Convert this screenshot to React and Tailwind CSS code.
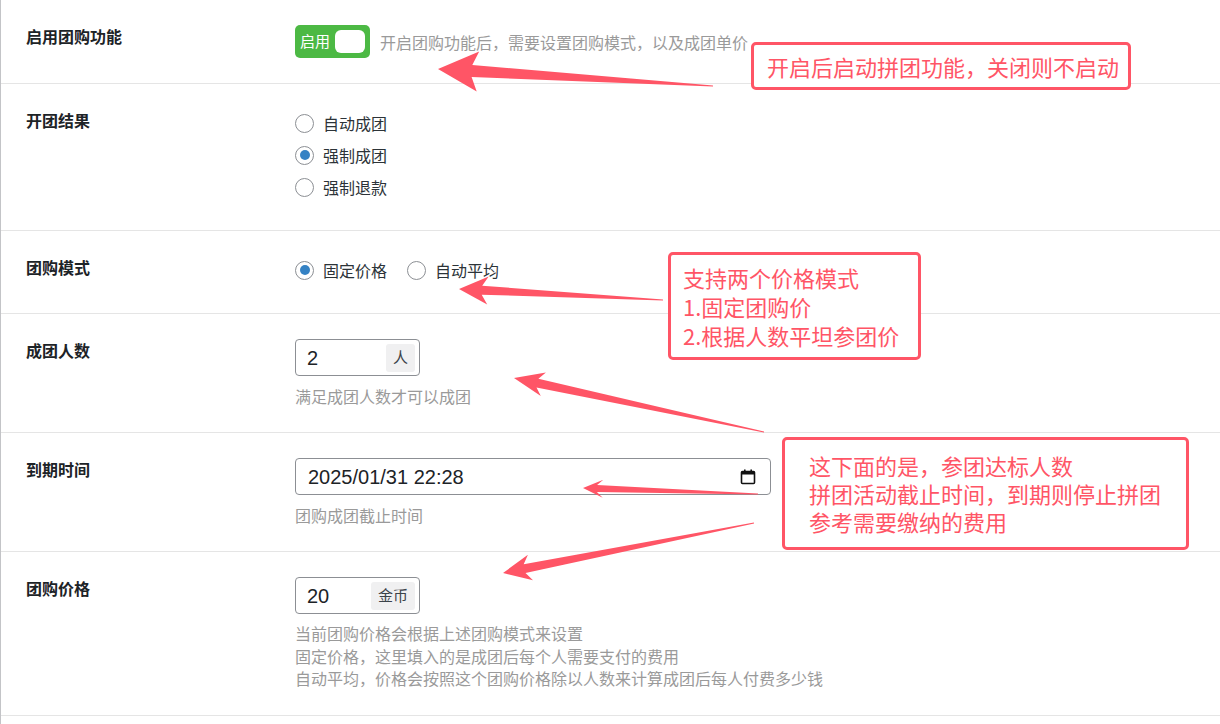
import React from 'react'

const RED = '#ff5566'

function arrowPoints(tail, tip, headLen, headW, shaftW) {
  const dx = tip[0] - tail[0]
  const dy = tip[1] - tail[1]
  const len = Math.hypot(dx, dy)
  const ux = dx / len
  const uy = dy / len
  const nx = -uy
  const ny = ux
  const bx = tip[0] - ux * headLen
  const by = tip[1] - uy * headLen
  const pts = [
    [tail[0] + nx * 0.6, tail[1] + ny * 0.6],
    [bx + nx * shaftW + ux * 2, by + ny * shaftW + uy * 2],
    [bx + nx * headW - ux * 4, by + ny * headW - uy * 4],
    tip,
    [bx - nx * headW - ux * 4, by - ny * headW - uy * 4],
    [bx - nx * shaftW + ux * 2, by - ny * shaftW + uy * 2],
    [tail[0] - nx * 0.6, tail[1] - ny * 0.6],
  ]
  return pts.map((p) => `${p[0].toFixed(1)},${p[1].toFixed(1)}`).join(' ')
}

const arrows = [
  { tail: [712, 86], tip: [437, 69], hl: 36, hw: 20, sw: 6 },
  { tail: [662, 300], tip: [458, 289], hl: 25, hw: 14, sw: 4.5 },
  { tail: [763, 432], tip: [513, 378], hl: 26, hw: 12, sw: 4.5 },
  { tail: [757, 494], tip: [582, 488], hl: 16, hw: 9, sw: 3.5 },
  { tail: [753, 523], tip: [502, 573], hl: 24, hw: 13, sw: 4.5 },
]

function Radio({ checked, label }) {
  return (
    <label className="flex items-center h-[28px] text-[16px] text-[#2c3338]">
      <span className="w-[19px] h-[19px] rounded-full border border-[#8c8f94] bg-white flex items-center justify-center mr-[9px]">
        {checked && <span className="w-[10px] h-[10px] rounded-full bg-[#3582c4]" />}
      </span>
      {label}
    </label>
  )
}

function Row({ label, children, className }) {
  return (
    <div className={`flex border-b border-[#e5e5e5] pt-[25px] ${className}`}>
      <div className="w-[294px] shrink-0 pl-[25px] text-[16px] leading-[22px] font-bold text-[#1d2327]">{label}</div>
      <div className="flex-1">{children}</div>
    </div>
  )
}

function Help({ children }) {
  return <div className="text-[16px] leading-[22.5px] text-[#9a9a9a]">{children}</div>
}

function Suffixed({ value, unit }) {
  return (
    <div className="w-[125px] h-[37px] border border-[#8c8f94] rounded-[4px] flex items-center pl-[11px] pr-[4px] bg-white">
      <span className="flex-1 text-[20px] text-[#1d2327] font-['Liberation_Sans','Noto_Sans',sans-serif]">{value}</span>
      <span className="h-[28px] px-[7px] rounded-[3px] bg-[#f0f0f1] text-[15px] text-[#3c434a] flex items-center">{unit}</span>
    </div>
  )
}

export default function App() {
  return (
    <div className="relative w-[1220px] h-[724px] bg-white overflow-hidden border-l border-[#c3c4c7] font-['Noto_Sans_CJK_SC','Noto_Sans',sans-serif]">
      <Row label="启用团购功能" className="h-[84px]">
        <div className="flex items-center">
          <div className="w-[75px] h-[33px] rounded-[5px] bg-[#4cb944] flex items-center pl-[5px] pr-[5px]">
            <span className="text-white text-[15px] flex-1">启用</span>
            <span className="w-[30px] h-[23px] bg-white rounded-[6px]" />
          </div>
          <span className="ml-[10px] text-[16px] text-[#9a9a9a]">开启团购功能后，需要设置团购模式，以及成团单价</span>
        </div>
      </Row>
      <Row label="开团结果" className="h-[147px]">
        <div className="flex flex-col gap-[4px]">
          <Radio label="自动成团" />
          <Radio checked label="强制成团" />
          <Radio label="强制退款" />
        </div>
      </Row>
      <Row label="团购模式" className="h-[83px]">
        <div className="flex gap-[20px]">
          <Radio checked label="固定价格" />
          <Radio label="自动平均" />
        </div>
      </Row>
      <Row label="成团人数" className="h-[119px]">
        <Suffixed value="2" unit="人" />
        <div className="mt-[9px]">
          <Help>满足成团人数才可以成团</Help>
        </div>
      </Row>
      <Row label="到期时间" className="h-[119px]">
        <div className="w-[476px] h-[37px] border border-[#8c8f94] rounded-[4px] flex items-center pl-[12px] pr-[14px]">
          <span className="flex-1 text-[20px] text-[#1d2327] font-['Liberation_Sans','Noto_Sans',sans-serif]">2025/01/31 22:28</span>
          <svg width="16" height="16" viewBox="0 0 16 16">
            <rect x="1.5" y="2.5" width="13" height="12" rx="1" fill="none" stroke="#111" strokeWidth="1.6" />
            <rect x="1.5" y="2.5" width="13" height="3" fill="#111" />
            <rect x="4" y="0.5" width="1.6" height="3" fill="#111" />
            <rect x="10.4" y="0.5" width="1.6" height="3" fill="#111" />
          </svg>
        </div>
        <div className="mt-[9px]">
          <Help>团购成团截止时间</Help>
        </div>
      </Row>
      <Row label="团购价格" className="h-[164px]">
        <Suffixed value="20" unit="金币" />
        <div className="mt-[8px]">
          <Help>当前团购价格会根据上述团购模式来设置</Help>
          <Help>固定价格，这里填入的是成团后每个人需要支付的费用</Help>
          <Help>自动平均，价格会按照这个团购价格除以人数来计算成团后每人付费多少钱</Help>
        </div>
      </Row>

      <svg className="absolute left-0 top-0 pointer-events-none" width="1220" height="724">
        {arrows.map((a, i) => (
          <polygon key={i} points={arrowPoints(a.tail, a.tip, a.hl, a.hw, a.sw)} fill={RED} />
        ))}
      </svg>

      <div className="absolute left-[750px] top-[42px] w-[380px] h-[48px] border-[3px] border-[#ff5566] rounded-[5px] bg-white pl-[13px] flex items-center text-[22px] text-[#ff5566]">
        开启后启动拼团功能，关闭则不启动
      </div>
      <div className="absolute left-[667px] top-[252px] w-[253px] h-[108px] border-[3px] border-[#ff5566] rounded-[5px] bg-white pl-[12px] pt-[8px] text-[22px] leading-[29px] text-[#ff5566]">
        <div>支持两个价格模式</div>
        <div>1.固定团购价</div>
        <div>2.根据人数平坦参团价</div>
      </div>
      <div className="absolute left-[781px] top-[437px] w-[407px] h-[113px] border-[3px] border-[#ff5566] rounded-[5px] bg-white pl-[24px] pt-[11px] text-[22px] leading-[28px] text-[#ff5566]">
        <div>这下面的是，参团达标人数</div>
        <div>拼团活动截止时间，到期则停止拼团</div>
        <div>参考需要缴纳的费用</div>
      </div>
    </div>
  )
}
